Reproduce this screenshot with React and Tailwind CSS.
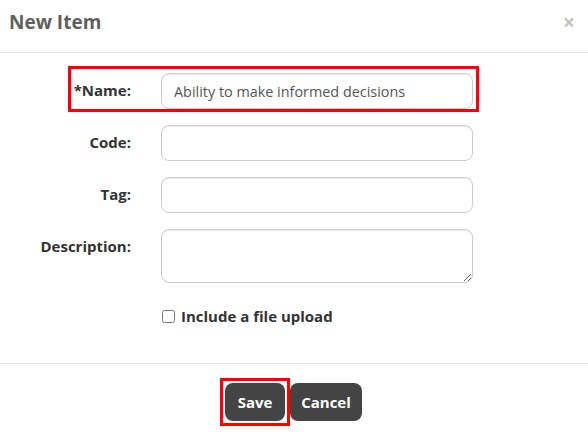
import { useState } from 'react'

const FIELDS = [
  { name: 'name', label: '*Name:', highlight: true },
  { name: 'code', label: 'Code:' },
  { name: 'tag', label: 'Tag:' },
  { name: 'description', label: 'Description:', multiline: true },
]

function Row({ field, value, onChange }) {
  const box = field.highlight ? 'border-[#f00]' : 'border-transparent'
  return (
    <div className={`ml-[68px] w-[411px] border-[3px] ${box} pt-[4px] pr-[3px] flex items-start`}>
      <div className="w-[60px] flex justify-end whitespace-nowrap pt-[7px] text-[15px] leading-[20px] font-bold text-[#333]">
        {field.label}
      </div>
      {field.multiline ? (
        <textarea
          name={field.name}
          value={value}
          onChange={onChange}
          className="ml-[30px] w-[312px] h-[54px] rounded-[8px] border border-[#ccc] px-3 py-2 text-[14.4px] text-[#555] shadow-[inset_0_1px_1px_rgba(0,0,0,0.075)] outline-none"
        />
      ) : (
        <input
          name={field.name}
          type="text"
          value={value}
          onChange={onChange}
          className="ml-[30px] w-[312px] h-[36px] rounded-[8px] border border-[#ccc] px-3 text-[14.4px] text-[#555] shadow-[inset_0_1px_1px_rgba(0,0,0,0.075)] outline-none"
        />
      )}
    </div>
  )
}

export default function App() {
  const [form, setForm] = useState({
    name: 'Ability to make informed decisions',
    code: '',
    tag: '',
    description: '',
    upload: false,
  })

  const handleChange = (e) => {
    setForm({ ...form, [e.target.name]: e.target.value })
  }

  return (
    <div className="w-[588px] h-[434px] bg-white font-['Open_Sans',sans-serif]">
      <div className="h-[53px] border-b border-[#e5e5e5] flex items-start justify-between pl-[9px] pr-[13px] pt-[8px]">
        <h4 className="text-[19px] leading-[28px] font-bold text-[#5f5f5f]">New Item</h4>
        <button className="mt-[4px] text-[21px] leading-none font-bold text-[#c4c4c4]">×</button>
      </div>

      <div className="pt-[13px] h-[310px]">
        <div className="flex flex-col gap-[6px]">
          {FIELDS.map(f => (
            <Row key={f.name} field={f} value={form[f.name]} onChange={handleChange} />
          ))}
        </div>
        <label className="mt-[20px] ml-[162px] flex items-center gap-[6px] text-[15px] leading-[20px] font-bold text-[#333]">
          <input
            type="checkbox"
            checked={form.upload}
            onChange={e => setForm({ ...form, upload: e.target.checked })}
            className="w-[13px] h-[13px] m-0"
          />
          Include a file upload
        </label>
      </div>

      <div className="border-t border-[#e5e5e5] pt-[14px] flex justify-center items-start pr-[6px]">
        <span className="border-[3px] border-[#f00] p-[2px] flex">
          <button className="h-[38px] w-[60px] rounded-[8px] bg-[#444] text-white text-[15px] font-bold">Save</button>
        </span>
        <button className="mt-[5px] h-[38px] w-[72px] rounded-[8px] bg-[#444] text-white text-[15px] font-bold">Cancel</button>
      </div>
    </div>
  )
}
